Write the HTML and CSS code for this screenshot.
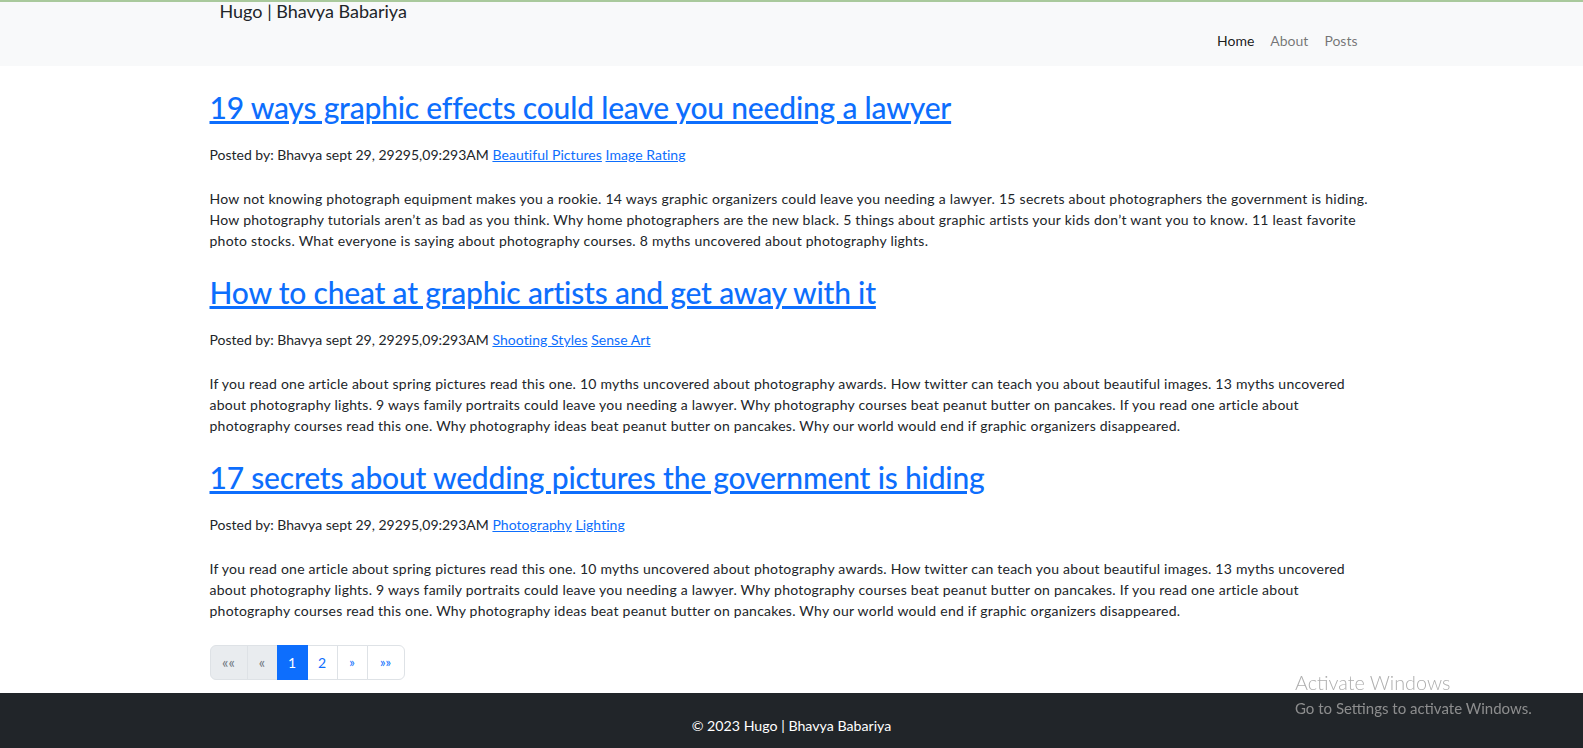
FILE: index.html
```html
<!DOCTYPE html>
<html lang="en">
<head>
<meta charset="utf-8">
<title>Hugo | Bhavya Babariya</title>
<link rel="stylesheet" href="styles.css">
</head>
<body>
<header class="navbar">
  <div class="container navbar-inner">
    <a class="brand" href="#">Hugo | Bhavya Babariya</a>
    <nav class="nav">
      <a class="nav-link active" href="#">Home</a>
      <a class="nav-link" href="#">About</a>
      <a class="nav-link" href="#">Posts</a>
    </nav>
  </div>
</header>
<main class="container content">
  <article class="post">
    <h2 class="post-title"><a href="#">19 ways graphic effects could leave you needing a lawyer</a></h2>
    <p class="meta">Posted by: Bhavya sept 29, 29295,09:293AM <a href="#">Beautiful Pictures</a> <a href="#">Image Rating</a></p>
    <p class="summary summary-tight">How not knowing photograph equipment makes you a rookie. 14 ways graphic organizers could leave you needing a lawyer. 15 secrets about photographers the government is hiding. How photography tutorials aren’t as bad as you think. Why home photographers are the new black. 5 things about graphic artists your kids don’t want you to know. 11 least favorite photo stocks. What everyone is saying about photography courses. 8 myths uncovered about photography lights.</p>
  </article>
  <article class="post">
    <h2 class="post-title"><a href="#">How to cheat at graphic artists and get away with it</a></h2>
    <p class="meta">Posted by: Bhavya sept 29, 29295,09:293AM <a href="#">Shooting Styles</a> <a href="#">Sense Art</a></p>
    <p class="summary">If you read one article about spring pictures read this one. 10 myths uncovered about photography awards. How twitter can teach you about beautiful images. 13 myths uncovered about photography lights. 9 ways family portraits could leave you needing a lawyer. Why photography courses beat peanut butter on pancakes. If you read one article about photography courses read this one. Why photography ideas beat peanut butter on pancakes. Why our world would end if graphic organizers disappeared.</p>
  </article>
  <article class="post">
    <h2 class="post-title"><a href="#">17 secrets about wedding pictures the government is hiding</a></h2>
    <p class="meta">Posted by: Bhavya sept 29, 29295,09:293AM <a href="#">Photography</a> <a href="#">Lighting</a></p>
    <p class="summary">If you read one article about spring pictures read this one. 10 myths uncovered about photography awards. How twitter can teach you about beautiful images. 13 myths uncovered about photography lights. 9 ways family portraits could leave you needing a lawyer. Why photography courses beat peanut butter on pancakes. If you read one article about photography courses read this one. Why photography ideas beat peanut butter on pancakes. Why our world would end if graphic organizers disappeared.</p>
  </article>
  <ul class="pagination">
    <li class="page-item disabled wide"><span>««</span></li>
    <li class="page-item disabled"><span>«</span></li>
    <li class="page-item active"><span>1</span></li>
    <li class="page-item"><a href="#">2</a></li>
    <li class="page-item small"><a href="#">»</a></li>
    <li class="page-item small wide"><a href="#">»»</a></li>
  </ul>
</main>
<footer class="footer">
  <p>© 2023 Hugo | Bhavya Babariya</p>
</footer>
<div class="activate">
  <div class="activate-title">Activate Windows</div>
  <div class="activate-sub">Go to Settings to activate Windows.</div>
</div>
</body>
</html>
```
FILE: styles.css
```css
* { box-sizing: border-box; }
html, body { margin: 0; padding: 0; }
body {
  font-family: Lato, "Liberation Sans", sans-serif;
  font-size: 14px;
  line-height: 1.5;
  color: #212529;
  background: #fff;
}
a { color: #0d6efd; }
.container {
  max-width: 1188px;
  margin: 0 auto;
  padding: 0 12px;
}
.navbar {
  background: #f8f9fa;
  border-top: 2px solid #a9c99c;
  height: 66px;
}
.navbar-inner {
  display: flex;
  flex-direction: column;
  padding-left: 22px;
  padding-right: 20px;
}
.brand {
  color: #212529;
  text-decoration: none;
  font-size: 18px;
  line-height: 20px;
  margin-top: -1px;
}
.nav {
  display: flex;
  justify-content: flex-end;
  margin-top: 9px;
}
.nav-link {
  color: rgba(0,0,0,.55);
  text-decoration: none;
  padding: 0 8px;
  font-size: 14px;
  line-height: 21px;
}
.nav-link.active { color: rgba(0,0,0,.9); }
.content { padding-top: 22px; }
.post-title {
  margin: 0 0 18px;
  font-size: 30px;
  font-weight: 500;
  line-height: 38px;
  letter-spacing: -0.2px;
}
.meta { margin: 0 0 23px; line-height: 21px; }
.meta a { letter-spacing: 0.05px; }
.summary { margin: 0 0 22px; letter-spacing: 0.24px; }
.summary-tight { letter-spacing: 0.26px; }
.post:last-of-type .summary { margin-bottom: 24px; }
.pagination {
  display: flex;
  list-style: none;
  margin: 0;
  padding: 0;
}
.page-item > * {
  display: flex;
  align-items: center;
  justify-content: center;
  height: 35px;
  width: 31px;
  border: 1px solid #dee2e6;
  margin-left: -1px;
  text-decoration: none;
  color: #0d6efd;
  background: #fff;
  font-size: 14px;
}
.page-item.wide > * { width: 38px; }
.page-item:first-child > * { margin-left: 0; border-radius: 6px 0 0 6px; }
.page-item:last-child > * { border-radius: 0 6px 6px 0; }
.page-item.disabled > * { background: #e9ecef; color: #6c757d; font-size: 15px; }
.page-item.small > * { font-size: 13px; }
.page-item.active > * { background: #0d6efd; border-color: #0d6efd; color: #fff; position: relative; }
.footer {
  background: #212529;
  color: #fff;
  text-align: center;
  margin-top: 13px;
  padding: 22px 0;
}
.footer p { margin: 0; font-size: 14.2px; line-height: 21px; }
.activate {
  position: fixed;
  left: 1295px;
  top: 669px;
  color: rgba(160,160,160,.85);
  pointer-events: none;
}
.activate-title { font-size: 19.8px; line-height: 26px; font-weight: 300; }
.activate-sub { font-size: 15px; line-height: 22px; margin-top: 2px; }
```
